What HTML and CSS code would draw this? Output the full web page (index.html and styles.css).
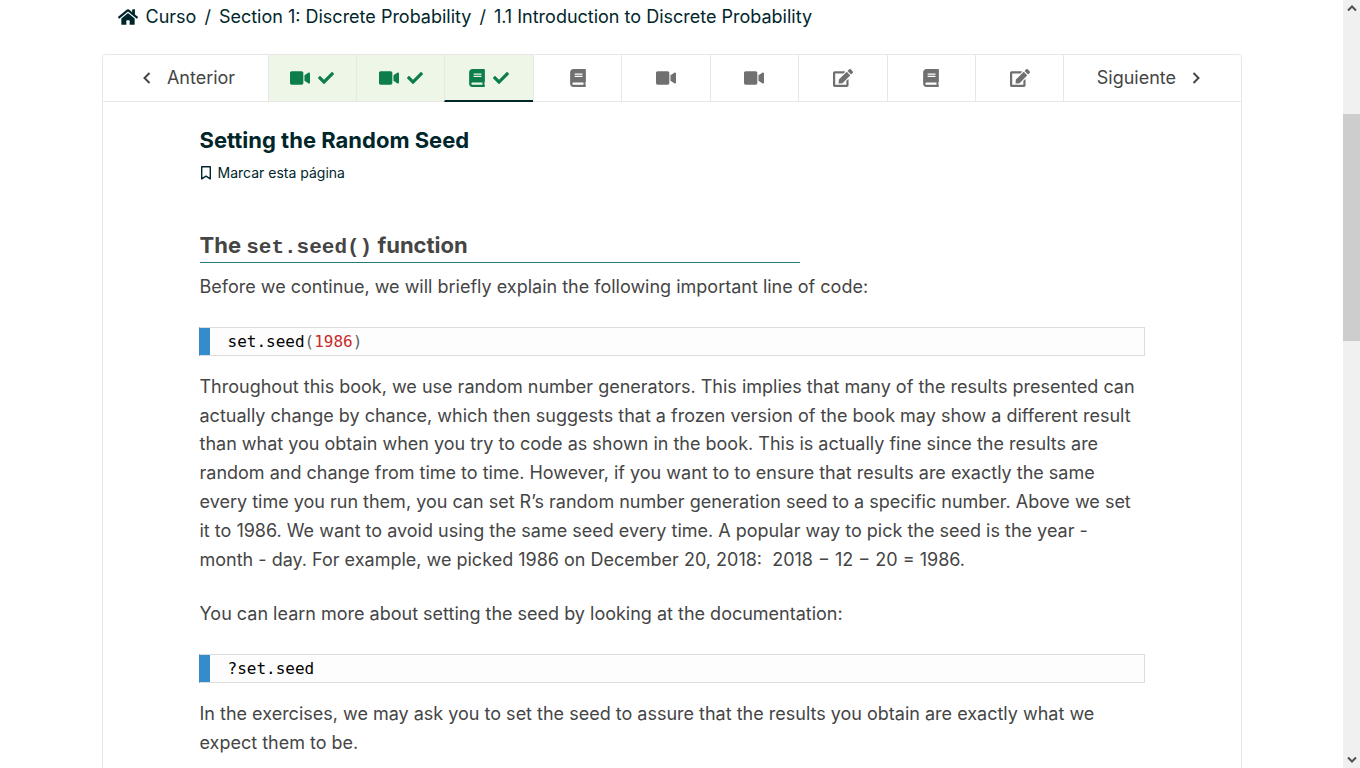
FILE: index.html
```html
<!DOCTYPE html>
<html lang="es">
<head>
<meta charset="utf-8">
<meta name="viewport" content="width=device-width, initial-scale=1">
<title>Setting the Random Seed</title>
<link rel="stylesheet" href="styles.css">
</head>
<body>
<svg class="sprite" aria-hidden="true">
  <symbol id="home" viewBox="0 0 576 512"><path d="M280.37 148.26L96 300.11V464a16 16 0 0 0 16 16l112.06-.29a16 16 0 0 0 15.92-16V368a16 16 0 0 1 16-16h64a16 16 0 0 1 16 16v95.64a16 16 0 0 0 16 16.05L464 480a16 16 0 0 0 16-16V300L295.67 148.26a12.19 12.19 0 0 0-15.3 0zM571.6 251.47L488 182.56V44.05a12 12 0 0 0-12-12h-56a12 12 0 0 0-12 12v72.61L318.47 43a48 48 0 0 0-61 0L4.34 251.47a12 12 0 0 0-1.6 16.9l25.5 31A12 12 0 0 0 45.15 301l235.22-193.74a12.19 12.19 0 0 1 15.3 0L530.9 301a12 12 0 0 0 16.9-1.6l25.5-31a12 12 0 0 0-1.7-16.93z"/></symbol>
  <symbol id="video" viewBox="0 0 576 512"><path d="M336.2 64H47.8C21.4 64 0 85.4 0 111.8v288.4C0 426.6 21.4 448 47.8 448h288.4c26.4 0 47.8-21.4 47.8-47.8V111.8c0-26.4-21.4-47.8-47.8-47.8zm189.4 37.7L416 177.3v157.4l109.6 75.5c21.2 14.6 50.4-.3 50.4-25.8V127.5c0-25.4-29.1-40.4-50.4-25.8z"/></symbol>
  <symbol id="check" viewBox="0 0 512 512"><path d="M173.898 439.404l-166.4-166.4c-9.997-9.997-9.997-26.206 0-36.204l36.203-36.204c9.997-9.998 26.207-9.998 36.204 0L192 312.69 432.095 72.596c9.997-9.997 26.207-9.997 36.204 0l36.203 36.204c9.997 9.997 9.997 26.206 0 36.204l-294.4 294.401c-9.998 9.997-26.207 9.997-36.204-.001z"/></symbol>
  <symbol id="book" viewBox="0 0 448 512"><path d="M448 360V24c0-13.3-10.7-24-24-24H96C43 0 0 43 0 96v320c0 53 43 96 96 96h328c13.3 0 24-10.7 24-24v-16c0-7.5-3.5-14.3-8.9-18.7-4.2-15.4-4.2-59.3 0-74.7 5.4-4.3 8.9-11.1 8.9-18.6zM128 134c0-3.3 2.7-6 6-6h212c3.3 0 6 2.7 6 6v20c0 3.3-2.7 6-6 6H134c-3.3 0-6-2.7-6-6v-20zm0 64c0-3.3 2.7-6 6-6h212c3.3 0 6 2.7 6 6v20c0 3.3-2.7 6-6 6H134c-3.3 0-6-2.7-6-6v-20zm253.4 250H96c-17.7 0-32-14.3-32-32 0-17.6 14.4-32 32-32h285.4c-1.9 17.1-1.9 46.9 0 64z"/></symbol>
  <symbol id="edit" viewBox="0 0 576 512"><path d="M402.6 83.2l90.2 90.2c3.8 3.8 3.8 10 0 13.8L274.4 405.6l-92.8 10.3c-12.4 1.4-22.9-9.1-21.5-21.5l10.3-92.8L388.8 83.2c3.8-3.8 10-3.8 13.8 0zm162-22.9l-48.8-48.8c-15.2-15.2-39.9-15.2-55.2 0l-35.4 35.4c-3.8 3.8-3.8 10 0 13.8l90.2 90.2c3.8 3.8 10 3.8 13.8 0l35.4-35.4c15.2-15.3 15.2-40 0-55.2zM384 346.2V448H64V128h229.8c3.2 0 6.2-1.3 8.5-3.5l40-40c7.6-7.6 2.2-20.5-8.5-20.5H48C21.5 64 0 85.5 0 112v352c0 26.5 21.5 48 48 48h352c26.5 0 48-21.5 48-48V306.2c0-10.7-12.9-16-20.5-8.5l-40 40c-2.2 2.3-3.5 5.3-3.5 8.5z"/></symbol>
  <symbol id="left" viewBox="0 0 8 12"><path d="M6.5 1L1.5 6l5 5" fill="none" stroke="currentColor" stroke-width="2"/></symbol>
  <symbol id="right" viewBox="0 0 8 12"><path d="M1.5 1l5 5-5 5" fill="none" stroke="currentColor" stroke-width="2"/></symbol>
  <symbol id="bookmark" viewBox="0 0 12 14"><path d="M1.7.7h8.6v12.2L6 10.2l-4.3 2.7z" fill="none" stroke="currentColor" stroke-width="1.4" stroke-linejoin="round"/></symbol>
  <symbol id="up" viewBox="0 0 10 7"><path d="M1 5.5l4-4 4 4" fill="none" stroke="currentColor" stroke-width="2"/></symbol>
  <symbol id="down" viewBox="0 0 10 7"><path d="M1 1.5l4 4 4-4" fill="none" stroke="currentColor" stroke-width="2"/></symbol>
</svg>
<div class="viewport">
  <div class="page">
    <nav class="breadcrumb" aria-label="Ruta">
      <a class="crumb" href="#"><svg class="icon-home"><use href="#home"/></svg>Curso</a>
      <span>/</span>
      <a class="crumb" href="#">Section 1: Discrete Probability</a>
      <span>/</span>
      <a class="crumb" href="#">1.1 Introduction to Discrete Probability</a>
    </nav>
    <div class="sequence">
      <nav class="tabs" aria-label="Secuencia">
        <button class="tab tab-prev" type="button"><svg class="icon-angle"><use href="#left"/></svg>Anterior</button>
        <button class="tab tab-done" type="button" aria-label="Video completado"><svg class="icon-wide"><use href="#video"/></svg><svg class="icon-check"><use href="#check"/></svg></button>
        <button class="tab tab-done" type="button" aria-label="Video completado"><svg class="icon-wide"><use href="#video"/></svg><svg class="icon-check"><use href="#check"/></svg></button>
        <button class="tab tab-done tab-active" type="button" aria-label="Lectura completada"><svg class="icon-book"><use href="#book"/></svg><svg class="icon-check"><use href="#check"/></svg></button>
        <button class="tab" type="button" aria-label="Lectura"><svg class="icon-book"><use href="#book"/></svg></button>
        <button class="tab" type="button" aria-label="Video"><svg class="icon-wide"><use href="#video"/></svg></button>
        <button class="tab" type="button" aria-label="Video"><svg class="icon-wide"><use href="#video"/></svg></button>
        <button class="tab" type="button" aria-label="Ejercicio"><svg class="icon-wide"><use href="#edit"/></svg></button>
        <button class="tab" type="button" aria-label="Lectura"><svg class="icon-book"><use href="#book"/></svg></button>
        <button class="tab" type="button" aria-label="Ejercicio"><svg class="icon-wide"><use href="#edit"/></svg></button>
        <button class="tab tab-next" type="button">Siguiente<svg class="icon-angle"><use href="#right"/></svg></button>
      </nav>
      <main class="unit">
        <h1 class="unit-title">Setting the Random Seed</h1>
        <button class="bookmark" type="button"><svg class="icon-bookmark"><use href="#bookmark"/></svg>Marcar esta página</button>
        <h2 class="heading">The <code class="heading-code">set.seed()</code> function</h2>
        <p class="text text-lead">Before we continue, we will briefly explain the following important line of code:</p>
        <pre class="code">set.seed<span class="paren">(</span><span class="number">1986</span><span class="paren">)</span></pre>
        <p class="text">Throughout this book, we use random number generators. This implies that many of the results presented can actually change by chance, which then suggests that a frozen version of the book may show a different result than what you obtain when you try to code as shown in the book. This is actually fine since the results are random and change from time to time. However, if you want to to ensure that results are exactly the same every time you run them, you can set R’s random number generation seed to a specific number. Above we set it to 1986. We want to avoid using the same seed every time. A popular way to pick the seed is the year - month - day. For example, we picked 1986 on December 20, 2018:&nbsp; 2018 − 12 − 20 = 1986.</p>
        <p class="text text-lead">You can learn more about setting the seed by looking at the documentation:</p>
        <pre class="code">?set.seed</pre>
        <p class="text">In the exercises, we may ask you to set the seed to assure that the results you obtain are exactly what we expect them to be.</p>
      </main>
    </div>
  </div>
  <div class="scrollbar" aria-hidden="true">
    <svg class="icon-scroll"><use href="#up"/></svg>
    <div class="track"><div class="thumb"></div></div>
    <svg class="icon-scroll"><use href="#down"/></svg>
  </div>
</div>
</body>
</html>
```
FILE: styles.css
```css
* { box-sizing: border-box; }
body {
  margin: 0;
  background: #fff;
  color: #454545;
  font: 18px/1.6 Inter, "Liberation Sans", sans-serif;
}
.sprite { display: none; }
svg { fill: currentColor; flex: none; }
.viewport {
  display: grid;
  grid-template-columns: 1fr 17px;
  height: 100vh;
  overflow: hidden;
}
.page {
  display: flex;
  flex-direction: column;
  width: 100%;
  max-width: 1140px;
  margin: 0 auto;
  min-height: 0;
}
.breadcrumb {
  display: flex;
  align-items: center;
  gap: 8px;
  padding: 2px 16px 23px;
  color: #00262b;
  line-height: 29px;
}
.crumb {
  display: flex;
  align-items: center;
  gap: 8px;
  color: inherit;
  text-decoration: none;
}
.icon-home { width: 20px; height: 18px; }
.sequence {
  flex: 1 0 auto;
  border: 1px solid #e7e7e7;
  border-radius: 4px 4px 0 0;
}
.tabs {
  display: flex;
  height: 47px;
  border-bottom: 1px solid #e7e7e7;
}
.tab {
  display: flex;
  flex: 1 1 0;
  align-items: center;
  justify-content: center;
  gap: 8px;
  margin: 0 0 -1px;
  padding: 0;
  border: solid #e7e7e7;
  border-width: 0 0 1px 1px;
  background: #fff;
  color: #707070;
  font: inherit;
}
.tab-prev, .tab-next { color: #454545; gap: 16px; }
.tab-prev { flex: 0 0 165px; border-left: 0; border-top-left-radius: 4px; padding-left: 8px; }
.tab-next { flex: 0 0 177px; border-top-right-radius: 4px; padding-right: 8px; }
.tab-done { background: #edf6e7; color: #0d7d4d; }
.tab-active { border-bottom: 2px solid #00262b; }
.icon-wide { width: 20px; height: 18px; }
.icon-book { width: 16px; height: 18px; }
.icon-check { width: 16px; height: 16px; }
.icon-angle { width: 8px; height: 12px; }
.unit { padding: 24px 96px 24px 97px; }
.unit-title {
  margin: 0;
  color: #00262b;
  font-size: 22px;
  line-height: 29px;
  font-weight: 700;
}
.bookmark {
  display: flex;
  align-items: center;
  gap: 6px;
  margin: 8px 0 47px;
  padding: 0;
  border: 0;
  background: none;
  color: #00262b;
  font: 14px/20px Inter, "Liberation Sans", sans-serif;
}
.icon-bookmark { width: 12px; height: 14px; }
.heading {
  max-width: 600px;
  margin: 0 0 10px;
  padding-bottom: 2px;
  border-bottom: 1px solid #23797c;
  font-size: 22px;
  line-height: 30px;
  font-weight: 700;
}
.heading-code { font: 700 21px/1 "Liberation Mono", monospace; }
.text { margin: 0 0 26px; }
.text-lead { margin-bottom: 25px; }
.code {
  margin: 0 0 17px -1px;
  padding: 0 28px;
  border: 1px solid #ddd;
  border-left-color: #358ccb;
  background: #fdfdfd;
  box-shadow: inset 10px 0 #358ccb;
  color: #000;
  font: 16px/27px "DejaVu Sans Mono", monospace;
}
.paren { color: #5f6364; }
.number { color: #c92c2c; }
.scrollbar {
  display: flex;
  flex-direction: column;
  align-items: center;
  justify-content: space-between;
  padding: 5px 0;
  background: #f0f0f0;
  color: #505050;
}
.track { flex: 1; width: 100%; padding: 102px 0; }
.thumb { height: 227px; background: #cdcdcd; }
.icon-scroll { width: 10px; height: 7px; }
```
